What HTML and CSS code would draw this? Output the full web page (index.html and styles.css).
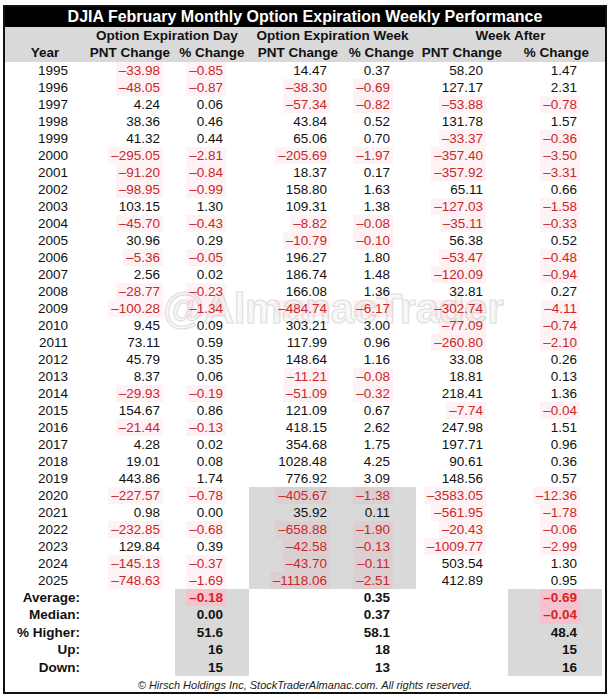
FILE: index.html
```html
<!DOCTYPE html>
<html>
<head>
<meta charset="utf-8">
<link rel="stylesheet" href="styles.css">
</head>
<body>
<div class="sheet">
  <div class="wm" aria-hidden="true">@AlmanacTrader</div>
  <div class="title">DJIA February Monthly Option Expiration Weekly Performance</div>
  <div class="head">
    <div class="hrow1"><span></span><span class="h-day">Option Expiration Day</span><span class="h-week">Option Expiration Week</span><span class="h-after">Week After</span></div>
    <div class="hrow2"><span>Year</span><span>PNT Change</span><span>% Change</span><span>PNT Change</span><span>% Change</span><span>PNT Change</span><span>% Change</span></div>
  </div>
  <div class="rows">
    <div class="row"><span>1995</span><span class="n">–33.98</span><span class="n">–0.85</span><span>14.47</span><span>0.37</span><span>58.20</span><span>1.47</span></div>
    <div class="row"><span>1996</span><span class="n">–48.05</span><span class="n">–0.87</span><span class="n">–38.30</span><span class="n">–0.69</span><span>127.17</span><span>2.31</span></div>
    <div class="row"><span>1997</span><span>4.24</span><span>0.06</span><span class="n">–57.34</span><span class="n">–0.82</span><span class="n">–53.88</span><span class="n">–0.78</span></div>
    <div class="row"><span>1998</span><span>38.36</span><span>0.46</span><span>43.84</span><span>0.52</span><span>131.78</span><span>1.57</span></div>
    <div class="row"><span>1999</span><span>41.32</span><span>0.44</span><span>65.06</span><span>0.70</span><span class="n">–33.37</span><span class="n">–0.36</span></div>
    <div class="row"><span>2000</span><span class="n">–295.05</span><span class="n">–2.81</span><span class="n">–205.69</span><span class="n">–1.97</span><span class="n">–357.40</span><span class="n">–3.50</span></div>
    <div class="row"><span>2001</span><span class="n">–91.20</span><span class="n">–0.84</span><span>18.37</span><span>0.17</span><span class="n">–357.92</span><span class="n">–3.31</span></div>
    <div class="row"><span>2002</span><span class="n">–98.95</span><span class="n">–0.99</span><span>158.80</span><span>1.63</span><span>65.11</span><span>0.66</span></div>
    <div class="row"><span>2003</span><span>103.15</span><span>1.30</span><span>109.31</span><span>1.38</span><span class="n">–127.03</span><span class="n">–1.58</span></div>
    <div class="row"><span>2004</span><span class="n">–45.70</span><span class="n">–0.43</span><span class="n">–8.82</span><span class="n">–0.08</span><span class="n">–35.11</span><span class="n">–0.33</span></div>
    <div class="row"><span>2005</span><span>30.96</span><span>0.29</span><span class="n">–10.79</span><span class="n">–0.10</span><span>56.38</span><span>0.52</span></div>
    <div class="row"><span>2006</span><span class="n">–5.36</span><span class="n">–0.05</span><span>196.27</span><span>1.80</span><span class="n">–53.47</span><span class="n">–0.48</span></div>
    <div class="row"><span>2007</span><span>2.56</span><span>0.02</span><span>186.74</span><span>1.48</span><span class="n">–120.09</span><span class="n">–0.94</span></div>
    <div class="row"><span>2008</span><span class="n">–28.77</span><span class="n">–0.23</span><span>166.08</span><span>1.36</span><span>32.81</span><span>0.27</span></div>
    <div class="row"><span>2009</span><span class="n">–100.28</span><span class="n">–1.34</span><span class="n">–484.74</span><span class="n">–6.17</span><span class="n">–302.74</span><span class="n">–4.11</span></div>
    <div class="row"><span>2010</span><span>9.45</span><span>0.09</span><span>303.21</span><span>3.00</span><span class="n">–77.09</span><span class="n">–0.74</span></div>
    <div class="row"><span>2011</span><span>73.11</span><span>0.59</span><span>117.99</span><span>0.96</span><span class="n">–260.80</span><span class="n">–2.10</span></div>
    <div class="row"><span>2012</span><span>45.79</span><span>0.35</span><span>148.64</span><span>1.16</span><span>33.08</span><span>0.26</span></div>
    <div class="row"><span>2013</span><span>8.37</span><span>0.06</span><span class="n">–11.21</span><span class="n">–0.08</span><span>18.81</span><span>0.13</span></div>
    <div class="row"><span>2014</span><span class="n">–29.93</span><span class="n">–0.19</span><span class="n">–51.09</span><span class="n">–0.32</span><span>218.41</span><span>1.36</span></div>
    <div class="row"><span>2015</span><span>154.67</span><span>0.86</span><span>121.09</span><span>0.67</span><span class="n">–7.74</span><span class="n">–0.04</span></div>
    <div class="row"><span>2016</span><span class="n">–21.44</span><span class="n">–0.13</span><span>418.15</span><span>2.62</span><span>247.98</span><span>1.51</span></div>
    <div class="row"><span>2017</span><span>4.28</span><span>0.02</span><span>354.68</span><span>1.75</span><span>197.71</span><span>0.96</span></div>
    <div class="row"><span>2018</span><span>19.01</span><span>0.08</span><span>1028.48</span><span>4.25</span><span>90.61</span><span>0.36</span></div>
    <div class="row"><span>2019</span><span>443.86</span><span>1.74</span><span>776.92</span><span>3.09</span><span>148.56</span><span>0.57</span></div>
    <div class="gw">
      <div class="row"><span>2020</span><span class="n">–227.57</span><span class="n">–0.78</span><span class="n">–405.67</span><span class="n">–1.38</span><span class="n">–3583.05</span><span class="n">–12.36</span></div>
      <div class="row"><span>2021</span><span>0.98</span><span>0.00</span><span>35.92</span><span>0.11</span><span class="n">–561.95</span><span class="n">–1.78</span></div>
      <div class="row"><span>2022</span><span class="n">–232.85</span><span class="n">–0.68</span><span class="n">–658.88</span><span class="n">–1.90</span><span class="n">–20.43</span><span class="n">–0.06</span></div>
      <div class="row"><span>2023</span><span>129.84</span><span>0.39</span><span class="n">–42.58</span><span class="n">–0.13</span><span class="n">–1009.77</span><span class="n">–2.99</span></div>
      <div class="row"><span>2024</span><span class="n">–145.13</span><span class="n">–0.37</span><span class="n">–43.70</span><span class="n">–0.11</span><span>503.54</span><span>1.30</span></div>
      <div class="row"><span>2025</span><span class="n">–748.63</span><span class="n">–1.69</span><span class="n">–1118.06</span><span class="n">–2.51</span><span>412.89</span><span>0.95</span></div>
    </div>
  </div>
  <div class="sum">
    <div class="row srow"><span class="lbl">Average:</span><span></span><span class="sn">–0.18</span><span></span><span>0.35</span><span></span><span class="sn">–0.69</span></div>
    <div class="row srow"><span class="lbl">Median:</span><span></span><span>0.00</span><span></span><span>0.37</span><span></span><span class="sn">–0.04</span></div>
    <div class="row srow"><span class="lbl">% Higher:</span><span></span><span>51.6</span><span></span><span>58.1</span><span></span><span>48.4</span></div>
    <div class="row srow"><span class="lbl">Up:</span><span></span><span>16</span><span></span><span>18</span><span></span><span>15</span></div>
    <div class="row srow"><span class="lbl">Down:</span><span></span><span>15</span><span></span><span>13</span><span></span><span>16</span></div>
  </div>
  <div class="foot">© Hirsch Holdings Inc, StockTraderAlmanac.com. All rights reserved.</div>
</div>
</body>
</html>
```

FILE: styles.css
```css
* { box-sizing: border-box; }
html, body { margin: 0; padding: 0; background: #fff; }
body {
  font-family: "Liberation Sans", Arial, sans-serif;
  color: #111;
}
.sheet {
  position: relative;
  margin: 5px 0 0 3px;
  width: 604px;
  border: 2px solid #111;
  background: #fff;
}
.wm {
  position: absolute;
  left: 158px;
  top: 281px;
  font-size: 42px;
  line-height: 42px;
  font-weight: bold;
  color: #f8f8f8;
  -webkit-text-stroke: 1.2px #e0e0e0;
  white-space: nowrap;
  z-index: 0;
  letter-spacing: -0.3px;
}
.title {
  height: 20px;
  line-height: 20px;
  background: #000;
  color: #fff;
  font-size: 16px;
  font-weight: bold;
  text-align: center;
}
.head {
  background: #d9d9d9;
  font-size: 13.5px;
  font-weight: bold;
  color: #111;
}
.hrow1, .hrow2, .row {
  display: grid;
  grid-template-columns: 80px 90px 74px 98px 69px 92px 97px;
}
.hrow1 { height: 17px; line-height: 18px; }
.hrow2 { height: 18px; line-height: 18px; }
.hrow1 span, .hrow2 span { text-align: center; white-space: nowrap; }
.h-day { grid-column: 2 / 4; }
.h-week { grid-column: 4 / 6; }
.h-after { grid-column: 6 / 8; }

.rows, .sum { position: relative; z-index: 1; }
.row {
  height: 17px;
  line-height: 17px;
  font-size: 13.5px;
  align-items: center;
}
.row span {
  justify-self: end;
  padding: 0 3px;
  white-space: nowrap;
}
.row span:nth-child(1) { margin-right: 14px; }
.row span:nth-child(2) { margin-right: 12px; }
.row span:nth-child(3) { margin-right: 23px; }
.row span:nth-child(4) { margin-right: 17px; }
.row span:nth-child(5) { margin-right: 23px; }
.row span:nth-child(6) { margin-right: 22px; }
.row span:nth-child(7) { margin-right: 25px; }
.row .n {
  color: #c8282a;
  background: rgba(255, 130, 160, 0.1);
}
.gw {
  background: linear-gradient(to right, transparent 244px, #d9d9d9 244px, #d9d9d9 411px, transparent 411px);
}
.sum {
  background: linear-gradient(to right, transparent 170px, #d9d9d9 170px, #d9d9d9 244px, transparent 244px, transparent 503px, #d9d9d9 503px, #d9d9d9 597px, transparent 597px);
}
.srow {
  height: 17.4px;
  line-height: 17.4px;
  font-weight: bold;
}
.row span.lbl { margin-right: 2px; }
.row .sn {
  color: #d42424;
  background: #f4c3ce;
}
.foot {
  height: 16px;
  padding-top: 3px;
  line-height: 13px;
  font-size: 11px;
  font-style: italic;
  text-align: center;
  color: #222;
}
```
